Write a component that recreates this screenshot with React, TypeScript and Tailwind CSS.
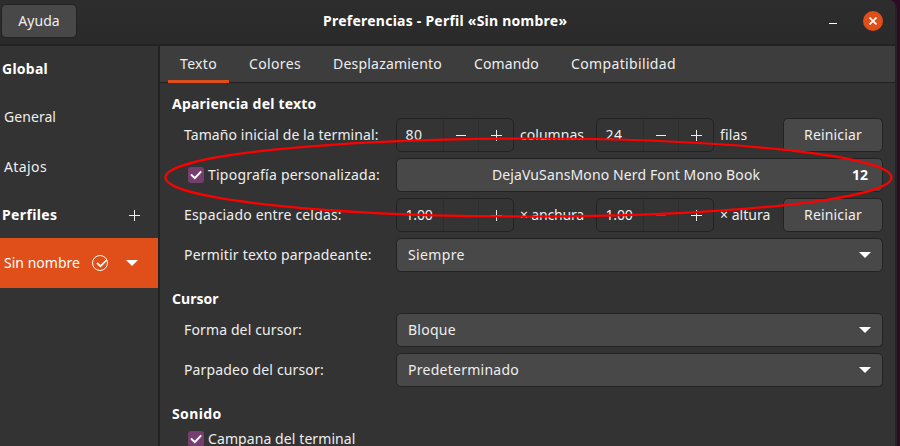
import type { ReactNode } from "react";

function Check() {
  return (
    <span className="flex size-4 shrink-0 items-center justify-center rounded-[3px] bg-[#763e6e]">
      <svg width="16" height="16" viewBox="0 0 16 16" fill="none" stroke="#fff" strokeWidth="2">
        <path d="M3 7.6 6.8 11.2 13.2 4.4" />
      </svg>
    </span>
  );
}

function Caret() {
  return (
    <svg width="12" height="6" viewBox="0 0 12 6" fill="#fff" className="shrink-0">
      <path d="M0 0H12L6 6Z" />
    </svg>
  );
}

function Plus() {
  return (
    <svg width="11" height="11" viewBox="0 0 11 11" fill="#eee" className="shrink-0" shapeRendering="crispEdges">
      <path d="M0 5H11V6H0ZM5 0H6V11H5Z" />
    </svg>
  );
}

function Minus({ dim }: { dim?: boolean }) {
  return <span className={dim ? "h-px w-[10px] bg-[#555]" : "h-px w-[10px] bg-[#eee]"} />;
}

function Spin({ value, tracking, dim }: { value: string; tracking: string; dim?: boolean }) {
  return (
    <div className="flex h-[34px] w-[118px] shrink-0 rounded-[5px] border border-[#222] bg-[#343434]">
      <div className={`flex w-[46px] items-center pl-[8.5px] ${tracking}`}>{value}</div>
      <div className="flex w-[35px] items-center justify-center border-l border-[#2e2e2e] pt-px">
        <Minus dim={dim} />
      </div>
      <div className="flex w-[35px] items-center justify-center border-l border-[#2e2e2e] pt-px">
        <Plus />
      </div>
    </div>
  );
}

const face = "flex h-[34px] items-center rounded-[5px] border border-[#222] bg-[#484848]";

function Reset() {
  return <button className={`${face} ml-auto w-[100px] justify-center tracking-[0.17px]`}>Reiniciar</button>;
}

function Combo({ children, tracking }: { children: ReactNode; tracking: string }) {
  return (
    <button className={`${face} flex-1 justify-between pl-[11px] pr-[11px] ${tracking}`}>
      {children}
      <Caret />
    </button>
  );
}

function Row({ label, tracking, children }: { label: ReactNode; tracking: string; children: ReactNode }) {
  return (
    <div className="flex h-[34px] items-center pl-3">
      <div className={`flex w-[212px] shrink-0 items-center ${tracking}`}>{label}</div>
      {children}
    </div>
  );
}

const tabs = [
  { name: "Texto", cls: "w-[61px] tracking-[0.33px] border-[#e04e19]" },
  { name: "Colores", cls: "w-[76px] tracking-[0.36px] border-transparent ml-2" },
  { name: "Desplazamiento", cls: "w-[133px] tracking-[0.21px] border-transparent ml-2" },
  { name: "Comando", cls: "w-[89px] tracking-[0.14px] border-transparent ml-2" },
  { name: "Compatibilidad", cls: "w-[129px] tracking-[0.35px] border-transparent ml-2" },
];

export default function App() {
  return (
    <div className="relative flex h-[446px] w-[900px] overflow-hidden whitespace-nowrap bg-[#300a24] font-['Noto_Sans','Open_Sans',sans-serif] text-[14px] leading-5 text-[#eee]">
      <div className="flex w-[897px] flex-col overflow-hidden rounded-tr-[8px] border-r-2 border-[#232323] bg-[#333]">
        <header className="flex h-[46px] shrink-0 items-start border-b-2 border-[#222] bg-linear-to-b from-[#2d2d2d] to-[#2a2a2a] pt-1">
          <button className={`${face} ml-[1px] w-[76px] justify-center tracking-[0.06px]`}>Ayuda</button>
          <h1 className="ml-[246px] mt-[7px] w-[506px] font-bold tracking-[0.24px] text-white">
            Preferencias - Perfil «Sin nombre»
          </h1>
          <span className="mt-[19px] h-px w-2 bg-white" />
          <span className="ml-[26px] mt-[7px] flex size-5 shrink-0 items-center justify-center rounded-full bg-[#e04e19]">
            <svg width="8" height="8" viewBox="0 0 8 8" stroke="#fff" strokeWidth="1.7">
              <path d="M.5.5 7.5 7.5M7.5.5.5 7.5" />
            </svg>
          </span>
        </header>

        <div className="flex min-h-0 flex-1">
          <aside className="w-40 shrink-0 border-r-2 border-[#222]">
            <div className="flex h-[46px] items-center pl-0.5 font-bold tracking-[0.26px] text-white">Global</div>
            <div className="flex h-[50px] items-center pl-1 tracking-[0.06px]">General</div>
            <div className="flex h-[50px] items-center pl-1 tracking-[0.39px]">Atajos</div>
            <div className="flex h-[46px] items-center justify-between pl-[2px] pr-[18px] font-bold tracking-[0.38px] text-white">
              Perfiles
              <Plus />
            </div>
            <div className="flex h-[50px] items-center bg-[#e04e19] pl-1 tracking-[0.02px] text-white">
              <span className="w-[88px]">Sin nombre</span>
              <svg width="16" height="16" viewBox="0 0 16 16" fill="none" stroke="#fff">
                <circle cx="8" cy="8" r="7.5" />
                <path d="M5 8 8.5 11.2 14.7 5" strokeWidth="1.7" />
              </svg>
              <span className="ml-[18px]">
                <Caret />
              </span>
            </div>
          </aside>

          <main className="min-w-0 flex-1">
            <nav className="flex h-[37px] border-b border-[#222] bg-[#3d3d3d] pl-2">
              {tabs.map((t) => (
                <div key={t.name} className={`-mb-px flex h-[37px] items-center justify-center border-b-3 pt-[2px] ${t.cls}`}>
                  {t.name}
                </div>
              ))}
            </nav>

            <div className="px-3">
              <h2 className="mt-[11px] h-5 font-bold tracking-[0.21px] text-white">Apariencia del texto</h2>
              <div className="mt-1 flex flex-col gap-1.5">
                <Row label="Tamaño inicial de la terminal:" tracking="tracking-[0.08px]">
                  <Spin value="80" tracking="tracking-[0.49px]" />
                  <span className="ml-1.5 w-[76px] tracking-[0.03px]">columnas</span>
                  <Spin value="24" tracking="tracking-[0.49px]" />
                  <span className="ml-1.5 tracking-[0.18px]">filas</span>
                  <Reset />
                </Row>
                <Row
                  label={
                    <span className="ml-1 flex items-center gap-1">
                      <Check />
                      Tipografía personalizada:
                    </span>
                  }
                  tracking="tracking-[0.23px]"
                >
                  <button className={`${face} flex-1`}>
                    <span className="flex-1 pl-[3px] text-center tracking-[0.12px]">DejaVuSansMono Nerd Font Mono Book</span>
                    <b className="w-[30px] text-left text-white">12</b>
                  </button>
                </Row>
                <Row label="Espaciado entre celdas:" tracking="tracking-[0.18px]">
                  <Spin value="1.00" tracking="tracking-[-0.19px]" dim />
                  <span className="ml-1.5 w-[76px] tracking-[-0.17px]">× anchura</span>
                  <Spin value="1.00" tracking="tracking-[-0.19px]" dim />
                  <span className="ml-1.5 tracking-[0.04px]">× altura</span>
                  <Reset />
                </Row>
                <Row label="Permitir texto parpadeante:" tracking="tracking-[0.19px]">
                  <Combo tracking="tracking-[0.36px]">Siempre</Combo>
                </Row>
              </div>

              <h2 className="mt-[17px] h-5 font-bold tracking-[0.02px] text-white">Cursor</h2>
              <div className="mt-1 flex flex-col gap-1.5">
                <Row label="Forma del cursor:" tracking="tracking-[0.13px]">
                  <Combo tracking="tracking-[0.25px]">Bloque</Combo>
                </Row>
                <Row label="Parpadeo del cursor:" tracking="tracking-[0.15px]">
                  <Combo tracking="tracking-[0.26px]">Predeterminado</Combo>
                </Row>
              </div>

              <h2 className="mt-[17px] h-5 font-bold tracking-[0.36px] text-white">Sonido</h2>
              <div className="ml-4 mt-[6px] flex h-[18px] items-center gap-1 leading-[16px] tracking-[0.09px]">
                <Check />
                Campana del terminal
              </div>
            </div>
          </main>
        </div>
      </div>

      <svg className="absolute inset-0" width="900" height="446" viewBox="0 0 900 446" fill="none">
        <ellipse cx="528.5" cy="177.5" rx="363" ry="39" stroke="#f00" strokeWidth="2.2" />
      </svg>
    </div>
  );
}
